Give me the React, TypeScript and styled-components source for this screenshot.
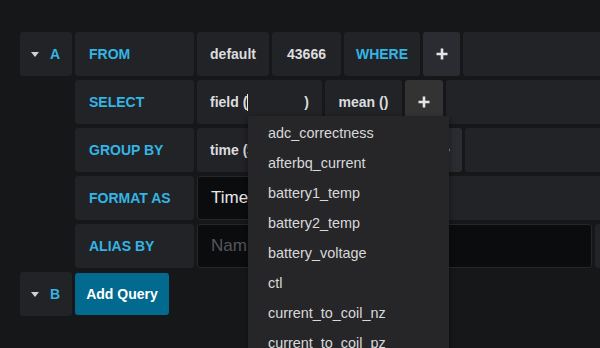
import React from "react";
import styled, { createGlobalStyle } from "styled-components";

const GlobalStyle = createGlobalStyle`
  html, body {
    margin: 0;
    padding: 0;
    background: #161719;
    overflow: hidden;
  }
  body {
    font-family: "Liberation Sans", Arial, sans-serif;
    color: #d8d9da;
  }
  * { box-sizing: border-box; }
`;

const Page = styled.div`
  width: 600px;
  height: 348px;
  padding: 32px 0 0 20px;
  display: flex;
  flex-direction: column;
  gap: 4px;
`;

const QueryBlock = styled.div`
  display: flex;
  align-items: flex-start;
  gap: 3px;
`;

const RefCell = styled.div`
  width: 52px;
  height: 44px;
  flex: none;
  background: #222327;
  border-radius: 3px;
  display: flex;
  align-items: center;
  gap: 11px;
  padding-left: 11px;
  color: #33b5e5;
  font-weight: bold;
  font-size: 14px;
`;

const Rows = styled.div`
  flex: 1;
  min-width: 0;
  display: flex;
  flex-direction: column;
  gap: 4px;
`;

const Row = styled.div`
  display: flex;
  gap: 3px;
  height: 44px;
`;

const Label = styled.div`
  width: 119px;
  flex: none;
  background: #222327;
  border-radius: 3px;
  display: flex;
  align-items: center;
  padding-left: 14px;
  color: #33b5e5;
  font-weight: bold;
  font-size: 14px;
  white-space: nowrap;
`;

const Segment = styled.div<{ $w: number; $blue?: boolean }>`
  position: relative;
  width: ${(p) => p.$w}px;
  flex: none;
  background: #222327;
  border-radius: 3px;
  display: flex;
  align-items: center;
  justify-content: center;
  color: ${(p) => (p.$blue ? "#33b5e5" : "#dcdddf")};
  font-weight: bold;
  font-size: 14px;
  white-space: nowrap;
`;

const FieldSegment = styled(Segment)`
  justify-content: flex-start;
  padding-left: 13px;
`;

const FieldInput = styled.span`
  display: inline-flex;
  align-items: center;
  width: 57px;
  height: 18px;
`;

const Caret = styled.span`
  width: 1px;
  height: 17px;
  background: #e8e8e8;
`;

const PlusButton = styled.div<{ $w: number; $bg: string }>`
  width: ${(p) => p.$w}px;
  flex: none;
  background: ${(p) => p.$bg};
  border-radius: 3px;
  display: flex;
  align-items: center;
  justify-content: center;
`;

const Filler = styled.div`
  flex: 1;
  min-width: 0;
  background: #222327;
  border-radius: 3px 0 0 3px;
`;

const DarkInput = styled.div<{ $w: number; $placeholder?: boolean }>`
  width: ${(p) => p.$w}px;
  flex: none;
  background: #0b0c0e;
  border: 1px solid #26272a;
  border-radius: 3px;
  display: flex;
  align-items: center;
  padding-left: 13px;
  font-size: 17px;
  color: ${(p) => (p.$placeholder ? "#55565a" : "#e9e9ea")};
  white-space: nowrap;
  overflow: hidden;
`;

const AddButton = styled.div`
  height: 42px;
  align-self: center;
  width: 94px;
  background: #016a8e;
  border-radius: 3px;
  display: flex;
  align-items: center;
  justify-content: center;
  color: #ffffff;
  font-weight: bold;
  font-size: 14px;
  white-space: nowrap;
`;

const Dropdown = styled.ul`
  position: absolute;
  left: 51px;
  top: 36px;
  width: 201px;
  margin: 0;
  padding: 2px 0 0;
  list-style: none;
  background: #262628;
  box-shadow: 0 2px 6px rgba(0, 0, 0, 0.45);
  z-index: 10;
`;

const DropItem = styled.li`
  height: 30px;
  line-height: 30px;
  padding-left: 20px;
  font-size: 14.4px;
  font-weight: normal;
  color: #d8d9da;
`;

const CaretDown = () => (
  <svg width="8" height="5" viewBox="0 0 8 5">
    <polygon points="0,0 8,0 4,5" fill="#d0d1d3" />
  </svg>
);

const PlusIcon = () => (
  <svg width="12" height="12" viewBox="0 0 12 12">
    <path d="M6 0.5 V11.5 M0.5 6 H11.5" stroke="#e4e5e7" strokeWidth="2.6" />
  </svg>
);

const fields = [
  "adc_correctness",
  "afterbq_current",
  "battery1_temp",
  "battery2_temp",
  "battery_voltage",
  "ctl",
  "current_to_coil_nz",
  "current_to_coil_pz",
  "current_to_coil_px",
];

export default function App() {
  return (
    <>
      <GlobalStyle />
      <Page>
        <QueryBlock>
          <RefCell>
            <CaretDown />
            <span>A</span>
          </RefCell>
          <Rows>
            <Row>
              <Label>FROM</Label>
              <Segment $w={72}>default</Segment>
              <Segment $w={69}>43666</Segment>
              <Segment $w={76} $blue>WHERE</Segment>
              <PlusButton $w={37} $bg="#2b2c31">
                <PlusIcon />
              </PlusButton>
              <Filler />
            </Row>
            <Row>
              <Label>SELECT</Label>
              <FieldSegment $w={125}>
                <span>field (</span>
                <FieldInput>
                  <Caret />
                </FieldInput>
                <span>)</span>
                <Dropdown>
                  {fields.map((f) => (
                    <DropItem key={f}>{f}</DropItem>
                  ))}
                </Dropdown>
              </FieldSegment>
              <Segment $w={77}>mean ()</Segment>
              <PlusButton $w={38} $bg="#333334">
                <PlusIcon />
              </PlusButton>
              <Filler />
            </Row>
            <Row>
              <Label>GROUP BY</Label>
              <FieldSegment $w={125}>time ($__interval)</FieldSegment>
              <Segment $w={97}>fill (null)</Segment>
              <PlusButton $w={37} $bg="#2b2c31">
                <PlusIcon />
              </PlusButton>
              <Filler />
            </Row>
            <Row>
              <Label>FORMAT AS</Label>
              <DarkInput $w={148}>Time series</DarkInput>
              <Filler />
            </Row>
            <Row>
              <Label>ALIAS BY</Label>
              <DarkInput $w={395} $placeholder>
                Naming pattern
              </DarkInput>
              <Filler />
            </Row>
          </Rows>
        </QueryBlock>
        <QueryBlock>
          <RefCell>
            <CaretDown />
            <span>B</span>
          </RefCell>
          <AddButton>Add Query</AddButton>
        </QueryBlock>
      </Page>
    </>
  );
}
